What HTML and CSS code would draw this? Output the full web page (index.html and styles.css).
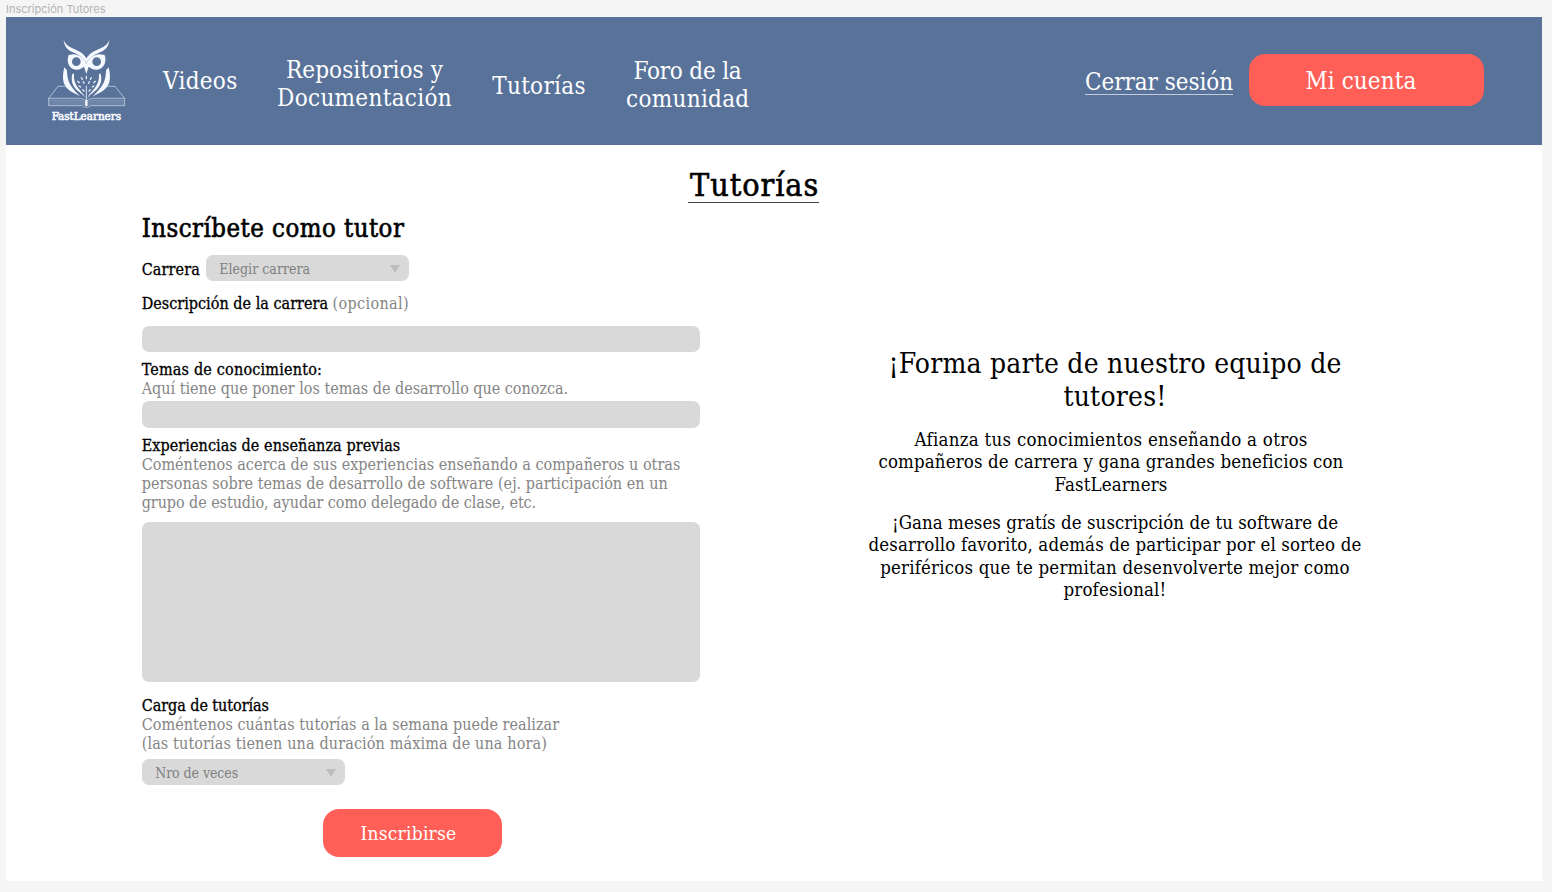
FILE: index.html
```html
<!DOCTYPE html>
<html lang="es">
<head>
<meta charset="utf-8">
<title>Inscripción Tutores</title>
<link rel="stylesheet" href="styles.css">
</head>
<body>
<p class="frame-name">Inscripción Tutores</p>
<div class="frame">
  <header class="topbar">
    <svg class="logo" viewBox="0 0 300 300" fill="none" stroke="#f6f8ff" stroke-linecap="round" stroke-linejoin="round">
      <g fill="#f6f8ff" stroke="none">
        <path d="M83 30C89 45 101 52 119 59C135 65 146 75 151 85C157 75 168 65 184 59C203 52 214 45 220 30C218 51 208 60 192 67C174 75 160 83 151 100C142 83 129 75 111 67C95 60 85 51 83 30Z"/>
        <path fill-rule="evenodd" d="M98 75L112 73C132 74 145 88 151 101C157 88 170 74 191 73L206 75C213 95 204 116 184 119C172 120 164 115 158 110L151 132L144 110C138 115 130 120 118 119C99 116 90 95 98 75ZM121 82A13 13 0 1 0 121 108A13 13 0 1 0 121 82ZM182 82A13 13 0 1 0 182 108A13 13 0 1 0 182 82Z"/>
        <path d="M85 112C76 148 82 170 104 184C115 190 124 194 134 201C116 180 93 166 93 121Z"/>
        <path d="M218 112C227 148 221 170 199 184C188 190 179 194 169 201C187 180 210 166 210 121Z"/>
        <path d="M109 131C103 156 112 171 126 183C135 190 143 196 148 203C142 184 111 172 114 131Z"/>
        <path d="M194 131C200 156 191 171 177 183C168 190 160 196 155 203C161 184 192 172 189 131Z"/>
      </g>
      <path stroke-width="3.6" d="M151 139v7M136 143l3 5M166 143l-3 5M125 154l5 4M178 154l-5 4M142 155l2 5M160 155l-2 5M129 168l5 3M174 168l-5 3M140 179l4 4M163 179l-4 4"/>
      <path stroke-width="2.6" d="M151 168v45"/>
      <path stroke-width="2.2" stroke="#cdd9ed" d="M88 169H66L38 205V227H137C142 227 143 232 151 232S160 227 165 227H266V205L237 169H215M38 205H125C142 205 150 210 151 216C152 210 160 205 177 205H266"/>
      <path stroke-width="1.4" stroke="#b9c8e0" d="M40 211H128C142 211 149 214 151 222C153 214 160 211 174 211H264M40 216H130C143 216 149 219 151 225C153 219 159 216 172 216H264M40 222H133C144 222 149 223 151 228C153 223 158 222 169 222H264"/>
      <path stroke-width="7" stroke-linecap="butt" d="M151 210v18"/>
      <text class="logo-text" x="47" y="270" textLength="208" lengthAdjust="spacingAndGlyphs">FastLearners</text>
    </svg>
    <nav class="nav">
      <a class="videos">Videos</a>
      <a class="repos"><span class="first">Repositorios y</span><br>Documentación</a>
      <a class="tutor">Tutorías</a>
      <a class="foro"><span class="first">Foro de la</span><br>comunidad</a>
    </nav>
    <a class="logout">Cerrar sesión</a>
    <button class="btn account" type="button">Mi cuenta</button>
  </header>
  <h1 class="title">Tutorías</h1>
  <main class="columns">
    <form class="form">
      <h2>Inscríbete como tutor</h2>
      <div class="row"><b>Carrera</b><div class="select"><span>Elegir carrera</span><i class="arrow"></i></div></div>
      <p class="desc"><b>Descripción de la carrera</b> <span class="optional">(opcional)</span></p>
      <div class="input"></div>
      <p class="temas"><b>Temas de conocimiento:</b><br>Aquí tiene que poner los temas de desarrollo que conozca.</p>
      <div class="input"></div>
      <p class="exp"><b>Experiencias de enseñanza previas</b><br>Coméntenos acerca de sus experiencias enseñando a compañeros u otras<br>personas sobre temas de desarrollo de software (ej. participación en un<br><span class="last">grupo de estudio, ayudar como delegado de clase, etc.</span></p>
      <div class="input area"></div>
      <p class="carga"><b>Carga de tutorías</b><br>Coméntenos cuántas tutorías a la semana puede realizar<br><span class="last">(las tutorías tienen una duración máxima de una hora)</span></p>
      <div class="select"><span class="tight">Nro de veces</span><i class="arrow"></i></div>
      <button class="btn submit" type="button">Inscribirse</button>
    </form>
    <aside class="promo">
      <h3>¡Forma parte de nuestro equipo de<br>tutores!</h3>
      <p class="benefits"><span class="first">Afianza tus conocimientos enseñando a otros</span><br>compañeros de carrera y gana grandes beneficios con<br>FastLearners</p>
      <p class="prizes"><span class="first">¡Gana meses gratís de suscripción de tu software de</span><br>desarrollo favorito, además de participar por el sorteo de<br><span class="third">periféricos que te permitan desenvolverte mejor como</span><br>profesional!</p>
    </aside>
  </main>
</div>
</body>
</html>
```
FILE: styles.css
```css
* { box-sizing: border-box; }
body { margin: 0; background: #f5f5f5; color: #000; font-family: "DejaVu Serif Condensed", "DejaVu Serif", serif; font-stretch: condensed; overflow: hidden; }
h1, h2, h3, p { margin: 0; font-weight: 400; }
b { font-weight: 400; color: #000; -webkit-text-stroke: 0.3px #000; }

.frame-name { height: 17px; padding: 2px 0 0 6px; font: 11px/14px Inter, sans-serif; color: #b3b3b3; }
.frame { width: 1536px; height: 864px; margin-left: 6px; background: #fff; }

.topbar { display: flex; align-items: flex-start; height: 128px; background: #587299; color: #fff; font-size: 24px; line-height: 28px; white-space: nowrap; }
.logo { width: 100px; height: 100px; margin: 13px 0 0 30px; flex: none; }
.logo-text { font-size: 33px; fill: #f6f8ff; stroke-width: 1.8px; }
.nav { display: flex; text-align: center; margin-left: 27px; flex: 1; letter-spacing: 0.3px; }
.videos { margin-top: 50px; width: 74px; }
.repos { margin: 39px 0 0 40px; width: 175px; }
.repos .first { letter-spacing: 0.08px; }
.tutor { margin: 55px 0 0 40px; width: 94px; }
.foro { margin: 40px 0 0 40px; width: 123px; }
.foro .first { letter-spacing: -0.2px; }
.logout { margin-top: 50px; padding-top: 1px; width: 148px; height: 28px; border-bottom: 1px solid #c3cddc; letter-spacing: -0.05px; }

.btn { display: block; padding: 0; border: 0; border-radius: 16px; background: #ff5f56; color: #fff; font: inherit; }
.account { width: 235px; height: 52.5px; margin: 36.7px 58px 0 16px; padding: 2px 11px 0 0; letter-spacing: 0.1px; }

.title { width: 131px; height: 36px; margin: 22px 0 0 682px; padding-left: 2px; font-size: 32px; line-height: 36px; letter-spacing: 0.95px; border-bottom: 1px solid #444; -webkit-text-stroke: 0.6px #000; white-space: nowrap; }
.columns { display: flex; white-space: nowrap; }

.form { width: 558px; margin: 9.5px 0 0 135.7px; font-size: 16px; line-height: 19.2px; letter-spacing: 0.02px; color: #858585; }
.form h2 { font-size: 25.5px; line-height: 30px; letter-spacing: 0.48px; color: #000; -webkit-text-stroke: 0.6px #000; }
.row { display: flex; align-items: center; margin-top: 12.3px; }
.row b { width: 64px; padding-top: 3px; letter-spacing: 0.12px; }
.select { display: flex; align-items: center; justify-content: space-between; width: 203px; height: 26.3px; padding: 3px 9px 0 13.5px; border-radius: 7px; background: #d9d9d9; color: #808080; font-size: 14px; letter-spacing: 0.04px; }
.select .tight { letter-spacing: -0.06px; }
.arrow { margin-top: -1px; border: 5px solid transparent; border-top: 8px solid #bdbdbd; border-bottom: 0; }
.input { height: 26.3px; border-radius: 7px; background: #d9d9d9; }
.desc { margin: 12.5px 0 12.8px; }
.desc .optional { letter-spacing: 0.35px; }
.temas { margin: 8px 0 3.2px; letter-spacing: -0.02px; }
.temas b { letter-spacing: 0.2px; }
.exp { margin: 8px 0 9.5px; }
.exp b { letter-spacing: 0.08px; }
.exp .last { letter-spacing: -0.07px; }
.area { height: 160px; }
.carga { margin: 13.7px 0 5.5px; letter-spacing: 0.04px; }
.carga b { letter-spacing: -0.05px; }
.carga .last { letter-spacing: 0.13px; }
.submit { width: 178.5px; height: 48px; margin: 23.4px 0 0 181.5px; padding: 2px 8px 0 0; font-size: 19px; letter-spacing: 0.25px; }

.promo { width: 500px; margin: 143.7px 0 0 165.3px; text-align: center; letter-spacing: 0.14px; }
.promo h3 { font-size: 28px; line-height: 33.5px; letter-spacing: 0.2px; }
.promo p { font-size: 18.5px; line-height: 22.4px; }
.promo .benefits { margin: 15.4px 8px 0 0; }
.benefits .first { letter-spacing: 0.29px; }
.promo .prizes { margin-top: 15.5px; }
.prizes .first { letter-spacing: 0.06px; }
.prizes .third { letter-spacing: 0.2px; }
```
